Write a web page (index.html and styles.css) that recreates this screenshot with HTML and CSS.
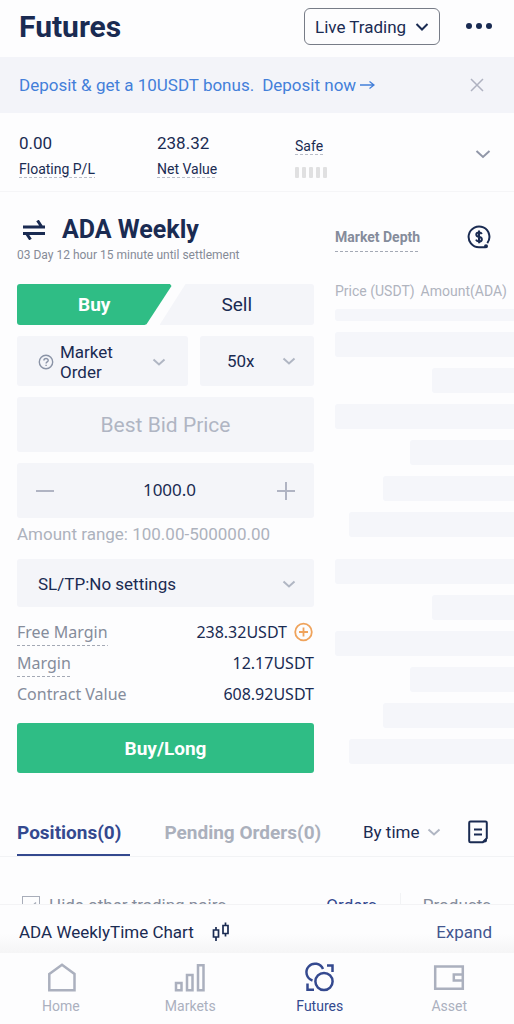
FILE: index.html
```html
<!DOCTYPE html>
<html lang="en">
<head>
<meta charset="utf-8">
<meta name="viewport" content="width=device-width, initial-scale=1">
<title>Futures</title>
<link rel="stylesheet" href="styles.css">
</head>
<body>
<div class="app">
  <header class="header">
    <h1 class="title">Futures</h1>
    <label class="picker mode">
      <select aria-label="Trading mode"><option>Live Trading</option></select>
      <svg class="chev dark" width="14" height="14" viewBox="0 0 14 14"><path d="M1.500 4l5.500 5.500 5.500-5.500"/></svg>
    </label>
    <button class="icon-btn" aria-label="More">
      <svg width="28" height="10" viewBox="0 0 28 10" fill="#1a2b52"><circle cx="4" cy="4" r="3"/><circle cx="14" cy="4" r="3"/><circle cx="24" cy="4" r="3"/></svg>
    </button>
  </header>

  <div class="banner">
    <span>Deposit &amp; get a 10USDT bonus.</span>
    <a href="#">Deposit now
      <svg width="16" height="12" viewBox="0 0 16 12"><path d="M1 6h14M10.500 2.500L15 6l-4.500 3.500"/></svg></a>
    <button class="icon-btn banner-close" aria-label="Close">
      <svg width="14" height="14" viewBox="0 0 14 14"><path d="M1 1l12 12M13 1L1 13" stroke="#afb2c1" stroke-width="1.500"/></svg>
    </button>
  </div>

  <main class="content">
    <section class="stats">
      <div class="stat"><span class="stat-value">0.00</span><span class="hint">Floating P/L</span></div>
      <div class="stat"><span class="stat-value">238.32</span><span class="hint">Net Value</span></div>
      <div class="stat risk"><span class="hint">Safe</span><span class="level"><i></i><i></i><i></i><i></i><i></i></span></div>
      <button class="icon-btn" aria-label="Show more">
        <svg class="chev grey" width="18" height="14" viewBox="0 0 18 14"><path d="M2.500 3l6.500 6 6.500-6"/></svg>
      </button>
    </section>

    <section class="trade">
      <form class="order">
        <div class="pair">
          <svg width="24" height="20" viewBox="0 0 24 20" fill="none" stroke="#1a2b52" stroke-width="3"><path d="M1 7h22M15.500 .5l4 6M23 13.500H1M4.500 13.500l4 6"/></svg>
          <h2>ADA Weekly</h2>
        </div>
        <p class="settle">03 Day 12 hour 15 minute until settlement</p>
        <div class="sides">
          <button type="button" class="side buy">Buy</button>
          <button type="button" class="side sell">Sell</button>
        </div>
        <div class="options">
          <button type="button" class="field type" aria-haspopup="listbox">
            <svg width="16" height="16" viewBox="0 0 16 16" fill="none" stroke="#8a93a6" stroke-width="1.400"><circle cx="8" cy="8" r="6.700"/><path d="M5.900 6.600c0-2.800 4.300-2.700 4.300-.2 0 1.500-2.100 1.500-2.100 3.100M8.100 10.700v1.300"/></svg>
            <span>Market Order</span>
            <svg class="chev" width="14" height="14" viewBox="0 0 14 14"><path d="M1.500 4.500l5.500 5 5.500-5"/></svg>
          </button>
          <label class="field picker leverage">
            <select aria-label="Leverage"><option>50x</option></select>
            <svg class="chev" width="14" height="14" viewBox="0 0 14 14"><path d="M1.500 4.500l5.500 5 5.500-5"/></svg>
          </label>
        </div>
        <input class="field price" aria-label="Price" placeholder="Best Bid Price" disabled>
        <div class="field stepper">
          <button type="button" class="icon-btn" aria-label="Decrease"><svg width="20" height="20" viewBox="0 0 20 20"><path d="M1 10h18"/></svg></button>
          <input aria-label="Amount" value="1000.0" size="6">
          <button type="button" class="icon-btn" aria-label="Increase"><svg width="20" height="20" viewBox="0 0 20 20"><path d="M1 10h18M10 1v18"/></svg></button>
        </div>
        <p class="range">Amount range: 100.00-500000.00</p>
        <label class="field picker sltp">
          <select aria-label="Stop loss and take profit"><option>SL/TP:No settings</option></select>
          <svg class="chev" width="14" height="14" viewBox="0 0 14 14"><path d="M1.500 4.500l5.500 5 5.500-5"/></svg>
        </label>
        <dl class="summary">
          <div><dt class="dashed">Free Margin</dt><dd>238.32USDT
            <button type="button" class="icon-btn" aria-label="Add funds"><svg width="20" height="20" viewBox="0 0 20 20" fill="none" stroke="#efa35c" stroke-width="1.800"><circle cx="9.500" cy="10" r="8.300"/><path d="M5 10h9M9.500 5.500v9"/></svg></button></dd></div>
          <div><dt class="dashed">Margin</dt><dd>12.17USDT</dd></div>
          <div><dt>Contract Value</dt><dd>608.92USDT</dd></div>
        </dl>
        <button type="button" class="submit">Buy/Long</button>
      </form>

      <aside class="depth">
        <div class="depth-head">
          <h3>Market Depth</h3>
          <button class="icon-btn" aria-label="Funds">
            <svg width="24" height="24" viewBox="0 0 24 24" fill="none" stroke="#1a2b52" stroke-width="2"><path d="M20.300 18.200A10.400 10.400 0 1 0 12 22.300h6.500"/><circle cx="19" cy="21.300" r="1" fill="#1a2b52"/><path stroke-width="2" d="M14.800 9c-.5-1.200-1.500-1.600-2.800-1.600-3.600 0-3.600 3.800 0 4.400 3.800.6 3.800 4.700 0 4.700-1.500 0-2.500-.6-3-1.800M12 5.500v12.700"/></svg>
          </button>
        </div>
        <div class="depth-cols"><span>Price (USDT)</span><span>Amount(ADA)</span></div>
        <div class="bars">
          <i class="bar cut"></i><i class="bar"></i><i class="bar w46"></i><i class="bar"></i><i class="bar w58"></i><i class="bar w73"></i><i class="bar w92"></i>
        </div>
        <div class="bars">
          <i class="bar"></i><i class="bar w46"></i><i class="bar"></i><i class="bar w58"></i><i class="bar w73"></i><i class="bar w92"></i>
        </div>
      </aside>
    </section>

    <section class="book">
      <div class="tabs">
        <button class="tab active">Positions(0)</button>
        <button class="tab">Pending Orders(0)</button>
        <label class="picker sort">
          <select aria-label="Sort"><option>By time</option></select>
          <svg class="chev" width="14" height="14" viewBox="0 0 14 14"><path d="M1.500 4.500l5.500 5 5.500-5"/></svg>
        </label>
        <button class="icon-btn" aria-label="History">
          <svg width="20" height="24" viewBox="0 0 20 24" fill="none" stroke="#1a2b52" stroke-width="2"><path d="M2.500 1.500h15q1.300 0 1.300 1.300v15.400l-4 4H2.500q-1.300 0-1.300-1.300V2.800q0-1.300 1.300-1.300zM6 9.500h8M6 14.500h8"/><path d="M14 22.500l5-5v2.500q0 2.500-2.500 2.500z" fill="#1a2b52" stroke="none"/></svg>
        </button>
      </div>
      <div class="filters">
        <label class="hide-others"><input type="checkbox" checked>Hide other trading pairs</label>
        <button class="filter on">Orders</button>
        <button class="filter">Products</button>
      </div>
    </section>
  </main>

  <footer class="footer">
    <div class="chart">
      <span>ADA WeeklyTime Chart</span>
      <svg width="18" height="20" viewBox="0 0 18 20" fill="none" stroke="#1a2b52" stroke-width="1.700"><path d="M1.500 8h5v7h-5zM4 5v3M4 15v4M11 3.500h5v8h-5zM13.500 .5v3M13.500 11.500v3"/></svg>
      <a href="#">Expand</a>
    </div>
    <nav class="nav">
      <a href="#"><svg width="32" height="32" viewBox="0 0 32 32"><path d="M4.300 13L17 3.800 29.500 13v16.200H4.300z"/></svg>Home</a>
      <a href="#"><svg width="32" height="32" viewBox="0 0 32 32"><path d="M2 22h5.500v7.200H2zM13 14h5.500v15.200H13zM24 4.200h5.500v25H24z"/></svg>Markets</a>
      <a href="#" class="current"><svg width="32" height="32" viewBox="0 0 32 32"><circle cx="20" cy="20.500" r="8.600"/><path d="M8.500 19.500A8.600 8.600 0 1 1 19 8M23 4.500h5.500V11M3.500 22.500v6.200H10"/></svg>Futures</a>
      <a href="#"><svg width="32" height="32" viewBox="0 0 32 32"><path d="M2.200 5.500h27.600v22.300H2.200zM29.800 13.500h-9v6h9"/></svg>Asset</a>
    </nav>
  </footer>
</div>
</body>
</html>
```
FILE: styles.css
```css
* { box-sizing: border-box; }
body, h1, h2, h3, p, dl, dt, dd { margin: 0; }
body {
  font-family: Roboto, "Liberation Sans", sans-serif;
  font-size: 17px;
  color: #1a2b52;
  background: #fdfdfe;
}
button, input, select {
  font: inherit;
  color: inherit;
  border: 0;
  padding: 0;
  margin: 0;
  background: none;
}
button, select { cursor: pointer; }
a { color: inherit; text-decoration: none; }
svg { display: block; flex: none; }

.app { display: flex; flex-direction: column; height: 100vh; overflow-x: hidden; }
.content { flex: 1; min-height: 0; overflow-y: auto; scrollbar-width: none; }

.icon-btn { display: inline-flex; }
.chev { fill: none; stroke: #b0b6c3; stroke-width: 2; pointer-events: none; }
.chev.dark { stroke: #1a2b52; }
.chev.grey { stroke: #9197a8; }
.picker { display: flex; align-items: center; }
.picker select { appearance: none; outline: 0; }

/* Header */
.header {
  display: flex;
  align-items: center;
  gap: 25px;
  height: 57px;
  padding: 0 21px 4px 19px;
}
.title { flex: 1; font-size: 30px; line-height: 36px; font-weight: 700; }
.mode {
  gap: 8px;
  height: 37px;
  padding: 0 10px;
  border: 1px solid #777c87;
  border-radius: 6px;
}

/* Deposit banner */
.banner {
  display: flex;
  align-items: center;
  gap: 8px;
  height: 56px;
  padding: 0 30px 0 19px;
  background: #f3f4f9;
  color: #437fd9;
}
.banner a { display: flex; align-items: center; gap: 3px; }
.banner a svg { fill: none; stroke: #437fd9; stroke-width: 1.3; }
.banner-close { margin-left: auto; }

/* Account stats */
.stats {
  display: grid;
  grid-template-columns: 138px 138px 1fr auto;
  align-items: center;
  padding: 18px 22px 13px 19px;
  border-bottom: 1px solid #f5f5f7;
}
.stat { display: flex; flex-direction: column; align-items: flex-start; gap: 6px; }
.stat-value { line-height: 24px; }
.hint {
  padding-bottom: 1px;
  font-size: 14px;
  line-height: 16px;
  background: repeating-linear-gradient(90deg, #b9bdc8 0 3px, transparent 3px 5px) bottom / 100% 1px no-repeat;
}
.risk { gap: 12px; padding-top: 7px; }
.level { display: flex; gap: 3px; }
.level i { width: 4px; height: 11px; border-radius: 1px; background: #e0e0e1; }

/* Order entry and depth */
.trade {
  display: grid;
  grid-template-columns: 297fr 179fr;
  gap: 21px;
  padding: 22px 0 0 17px;
}
.pair { display: flex; align-items: center; gap: 16px; padding-left: 5px; }
.pair h2 { font-size: 25px; line-height: 31px; font-weight: 700; }
.settle { font-size: 12px; line-height: 20px; color: #858b97; }
.sides { display: grid; grid-template-columns: 1fr 1fr; margin: 19px 0 11px; }
.side { height: 41px; font-size: 19px; }
.buy {
  margin-right: -6px;
  background: #2fbd85;
  color: #fff;
  font-weight: 700;
  border-radius: 3px 0 0 3px;
  clip-path: polygon(0 0, 99% 0, 100% 2px, calc(100% - 25px) 98%, calc(100% - 27px) 100%, 0 100%);
}
.sell {
  margin-left: -6px;
  background: #f4f5f9;
  border-radius: 0 3px 3px 0;
  clip-path: polygon(26px 0, 100% 0, 100% 100%, 0 100%);
}
.options { display: grid; grid-template-columns: 171fr 114fr; gap: 12px; }
.field { background: #f4f5f9; border-radius: 3px; }
.type {
  display: flex;
  align-items: center;
  gap: 6px;
  height: 50px;
  padding: 1px 22px 0 21px;
  line-height: 20px;
  text-align: left;
}
.type span { flex: 1; }
.leverage { padding: 0 18px 0 27px; }
.leverage select, .sltp select { flex: 1; min-width: 0; }
.price {
  display: block;
  width: 100%;
  height: 55px;
  margin: 11px 0;
  font-size: 21px;
  text-align: center;
}
.price::placeholder { color: #b0b5c3; opacity: 1; }
.stepper {
  display: flex;
  align-items: center;
  justify-content: space-between;
  height: 55px;
  padding: 0 18px;
}
.stepper svg { stroke: #b0b4c3; stroke-width: 2; }
.stepper input {
  flex: 1;
  min-width: 0;
  padding: 0 0 3px 8px;
  text-align: center;
  font-family: "Noto Sans", sans-serif;
}
.range { margin: 6px 0 14px; line-height: 21px; color: #adb2bd; }
.sltp { height: 48px; padding: 1px 18px 0 21px; }

.summary {
  display: flex;
  flex-direction: column;
  gap: 6px;
  padding: 13px 0 17px;
  font-family: "Noto Sans", sans-serif;
  font-size: 16px;
  line-height: 24px;
}
.summary div { display: flex; justify-content: space-between; align-items: flex-start; }
.summary dt { color: #858c9b; }
.summary dd { display: flex; align-items: center; gap: 7px; margin-right: 0; }
.dashed {
  padding-bottom: 2px;
  margin-bottom: -1px;
  background: repeating-linear-gradient(90deg, #a4a9b5 0 3px, transparent 3px 5px) bottom / 100% 1px no-repeat;
}
.submit {
  width: 100%;
  height: 50px;
  border-radius: 3px;
  background: #2fbd85;
  color: #fff;
  font-size: 19px;
  font-weight: 700;
}

.depth-head {
  display: flex;
  justify-content: space-between;
  align-items: center;
  padding: 8px 23px 0 0;
}
.depth-head h3 {
  padding: 6px 0 6px;
  font-size: 14px;
  line-height: 18px;
  font-weight: 700;
  color: #858c9b;
  background: repeating-linear-gradient(90deg, #a4a9b5 0 3px, transparent 3px 5px) bottom / 100% 1px no-repeat;
}
.depth-cols {
  display: flex;
  justify-content: space-between;
  padding: 30px 7px 9px 0;
  font-size: 14px;
  line-height: 18px;
  color: #b0b4be;
}
.bars { display: flex; flex-direction: column; align-items: flex-end; gap: 11px; margin-bottom: 22px; }
.bars:last-child { margin-bottom: 0; }
.bar { width: 100%; height: 25px; border-radius: 3px 0 0 3px; background: #f5f6fa; }
.bar.cut { height: 12px; }
.bar.w46 { width: 46%; }
.bar.w58 { width: 58%; }
.bar.w73 { width: 73%; }
.bar.w92 { width: 92%; }

/* Positions */
.tabs {
  display: flex;
  align-items: center;
  margin-top: 34px;
  padding: 0 26px 0 17px;
  border-bottom: 1px solid #f2f3f5;
}
.tab {
  height: 49px;
  margin-right: 34px;
  padding: 3px 9px 0 0;
  border-bottom: 2px solid transparent;
  font-size: 19px;
  font-weight: 700;
  color: #abb0bc;
}
.tab + .tab { margin-right: 0; padding-right: 0; }
.tab.active { color: #34498f; border-color: #34498f; }
.sort { gap: 7px; margin: 0 27px 0 auto; }
.filters {
  display: flex;
  align-items: center;
  gap: 23px;
  padding: 36px 23px 20px 22px;
  line-height: 24px;
  color: #858c9b;
}
.hide-others { display: flex; align-items: center; gap: 9px; margin-right: auto; }
.hide-others input {
  appearance: none;
  width: 18px;
  height: 18px;
  border: 1px solid #a8adb9;
  background: url("data:image/svg+xml,%3Csvg xmlns='http://www.w3.org/2000/svg' viewBox='0 0 16 16'%3E%3Cpath d='M3.500 8l3.500 3.500 6-6' fill='none' stroke='%23a8adb9' stroke-width='1.500'/%3E%3C/svg%3E") center / 16px 16px no-repeat;
}
.filter + .filter { padding-left: 22px; border-left: 1px solid #f2f3f5; }
.filter.on { color: #34498f; }

/* Bottom area */
.chart {
  display: flex;
  align-items: center;
  gap: 18px;
  height: 49px;
  padding: 6px 22px 0 19px;
  border-top: 1px solid #f3f3f5;
  background: linear-gradient(#fdfdfe 60%, #f5f5f6);
}
.chart a { margin-left: auto; color: #43568f; }
.nav {
  display: grid;
  grid-template-columns: repeat(4, 1fr);
  height: 71px;
  margin-left: -4px;
  padding-top: 8px;
  background: #fdfdfe;
}
.nav a {
  display: flex;
  flex-direction: column;
  align-items: center;
  gap: 4px;
  font-size: 14px;
  line-height: 18px;
  color: #abb0be;
}
.nav svg { fill: none; stroke: #abb0be; stroke-width: 2.5; }
.nav .current { color: #34498f; }
.nav .current svg { stroke: #34498f; }
```
